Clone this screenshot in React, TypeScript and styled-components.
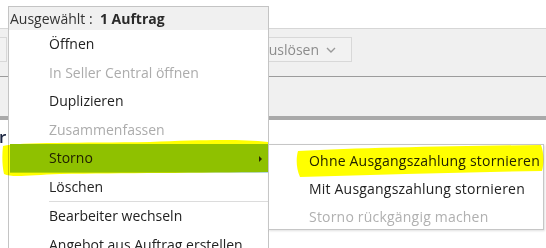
import styled, { createGlobalStyle } from "styled-components";

const GlobalStyle = createGlobalStyle`
  html, body {
    margin: 0;
    padding: 0;
    background: #ffffff;
    overflow: hidden;
  }
  body {
    font-family: "Open Sans", "Noto Sans", sans-serif;
  }
`;

interface MenuEntry {
  label: string;
  disabled?: boolean;
  active?: boolean;
  submenu?: boolean;
  separatorBefore?: boolean;
}

const mainItems: MenuEntry[] = [
  { label: "Öffnen" },
  { label: "In Seller Central öffnen", disabled: true },
  { label: "Duplizieren" },
  { label: "Zusammenfassen", disabled: true },
  { label: "Storno", active: true, submenu: true },
  { label: "Löschen" },
  { label: "Bearbeiter wechseln", separatorBefore: true },
  { label: "Angebot aus Auftrag erstellen" },
];

const subItems: MenuEntry[] = [
  { label: "Ohne Ausgangszahlung stornieren" },
  { label: "Mit Ausgangszahlung stornieren" },
  { label: "Storno rückgängig machen", disabled: true },
];

const Chevron = () => (
  <svg width="10" height="6" viewBox="0 0 10 6">
    <polyline
      points="1,1 5,5 9,1"
      fill="none"
      stroke="#9a9a9a"
      strokeWidth="1.4"
    />
  </svg>
);

const App = () => {
  return (
    <>
      <GlobalStyle />
      <Page>
        <TopGap />
        <Toolbar>
          <ToolButton $width={30}>
            <Chevron />
          </ToolButton>
          <ToolButton $width={175}>
            <span>Zahlung auslösen</span>
            <Chevron />
          </ToolButton>
        </Toolbar>
        <SubBar />
        <Content>
          <Heading>r</Heading>
        </Content>

        <Menu>
          <MenuHeader>
            Ausgewählt :&nbsp; <strong>1 Auftrag</strong>
          </MenuHeader>
          {mainItems.map((item) => (
            <div key={item.label}>
              {item.separatorBefore && <Separator />}
              <MenuItem $disabled={item.disabled} $active={item.active}>
                {item.label}
                {item.submenu && <SubArrow />}
              </MenuItem>
            </div>
          ))}
        </Menu>

        <SubMenu>
          {subItems.map((item) => (
            <SubMenuItem key={item.label} $disabled={item.disabled}>
              {item.label}
            </SubMenuItem>
          ))}
        </SubMenu>

        <Highlighter width="546" height="248" viewBox="0 0 546 248">
          <path d="M3,146 C20,142 80,143 150,142 C200,140 240,139 268,142 L268,172 C200,173 120,173 60,174 C30,175 12,178 4,174 C2,165 2,155 3,146 Z" />
          <path d="M298,151 C360,148 450,146 541,145 C544,152 544,164 542,171 C460,172 380,175 300,177 C296,168 296,158 298,151 Z" />
        </Highlighter>
      </Page>
    </>
  );
};

const Page = styled.div`
  position: relative;
  width: 546px;
  height: 248px;
  overflow: hidden;
  background: #ffffff;
  display: flex;
  flex-direction: column;
  font-size: 14px;
`;

const TopGap = styled.div`
  height: 28px;
`;

const Toolbar = styled.div`
  height: 49px;
  box-sizing: border-box;
  border-top: 1px solid #d6d6d6;
  border-bottom: 1px solid #9c9c9c;
  background: #f0f0f0;
  display: flex;
  align-items: flex-start;
  padding-top: 8px;
  gap: 170px;
  margin-left: -23px;
`;

const ToolButton = styled.div<{ $width: number }>`
  width: ${(p) => p.$width}px;
  height: 25px;
  box-sizing: border-box;
  border: 1px solid #d8d8d8;
  background: #f2f2f2;
  display: flex;
  align-items: center;
  justify-content: flex-end;
  gap: 7px;
  padding-right: 15px;
  color: #8c8c8c;
  font-size: 14px;
  white-space: nowrap;
`;

const SubBar = styled.div`
  height: 39px;
  background: #f0f0f0;
  border-bottom: 4px solid #a9a9a9;
`;

const Content = styled.div`
  flex: 1;
  padding-top: 7px;
`;

const Heading = styled.div`
  font-size: 17px;
  font-weight: 600;
  color: #1a2440;
  line-height: 20px;
  margin-left: -1px;
`;

const Menu = styled.div`
  position: absolute;
  left: 8px;
  top: 6px;
  width: 261px;
  height: 260px;
  box-sizing: border-box;
  border: 1px solid #c4c4c4;
  background: #ffffff;
`;

const MenuHeader = styled.div`
  height: 23px;
  background: #f0f0f0;
  color: #333333;
  padding-left: 1px;
  line-height: 23px;
  font-size: 14px;
  white-space: nowrap;

  strong {
    font-weight: 700;
    color: #2a2a2a;
  }
`;

const MenuItem = styled.div<{ $disabled?: boolean; $active?: boolean }>`
  position: relative;
  height: 28.5px;
  line-height: 28.5px;
  padding-left: 39px;
  margin-left: 1px;
  color: ${(p) => (p.$disabled ? "#acacac" : "#222222")};
  background: ${(p) => (p.$active ? "#8fc100" : "transparent")};
  box-shadow: ${(p) => (p.$active ? "inset 0 -1px 0 #b7d6ef" : "none")};
  white-space: nowrap;
`;

const SubArrow = styled.span`
  position: absolute;
  right: 6px;
  top: 12px;
  width: 0;
  height: 0;
  border-top: 3px solid transparent;
  border-bottom: 3px solid transparent;
  border-left: 3px solid #2a2a2a;
`;

const Separator = styled.div`
  height: 1px;
  margin: 0 0 0 40px;
  background: #dcdcdc;
`;

const SubMenu = styled.div`
  position: absolute;
  left: 268px;
  top: 144px;
  width: 276px;
  box-sizing: border-box;
  border: 1px solid #c6c6c6;
  background: #ffffff;
  box-shadow: 1px 1px 2px rgba(0, 0, 0, 0.12);
`;

const SubMenuItem = styled.div<{ $disabled?: boolean }>`
  height: 28px;
  line-height: 31px;
  padding-left: 40px;
  letter-spacing: 0.2px;
  color: ${(p) => (p.$disabled ? "#b0b0b0" : "#222222")};
  white-space: nowrap;
`;

const Highlighter = styled.svg`
  position: absolute;
  left: 0;
  top: 0;
  pointer-events: none;
  mix-blend-mode: multiply;

  path {
    fill: #ffff00;
  }
`;

export default App;
